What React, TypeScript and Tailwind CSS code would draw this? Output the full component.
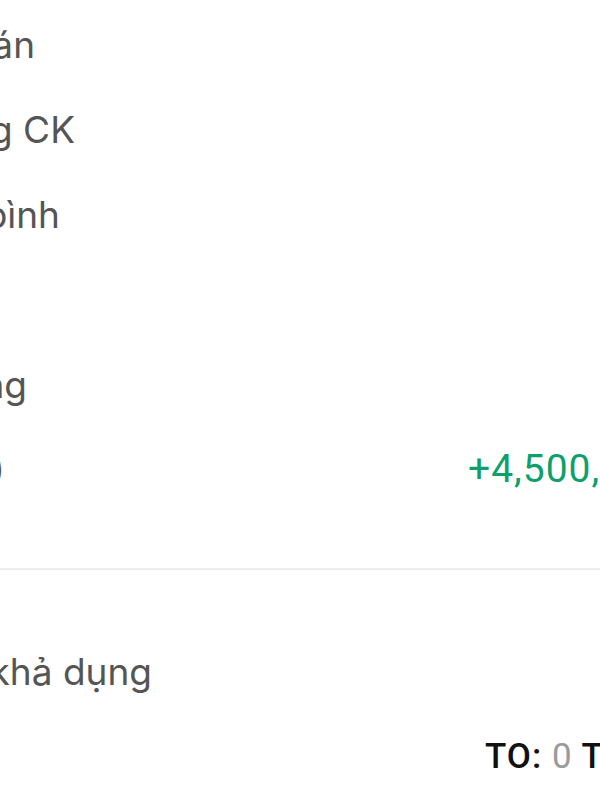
const rows = [
  { label: 'Giá bán', edge: 'w-[35px]' },
  { label: 'Số lượng CK', edge: 'w-[75px]' },
  { label: 'Giá trung bình', edge: 'w-[60px]' },
  { label: 'Phí', edge: 'w-[0px] -ml-[12px]' },
  { label: 'Tổng', edge: 'w-[27px]' },
];

function Label({ text, edge }: { text: string; edge: string }) {
  return (
    <div className={`${edge} shrink-0 flex justify-end whitespace-nowrap`}>
      <span className="text-[37px] leading-none text-[#555555]">{text}</span>
    </div>
  );
}

export default function App() {
  return (
    <div className="relative h-[800px] w-[600px] overflow-hidden bg-white font-['Inter','Noto_Sans',sans-serif]">
      <div className="pt-[2px]">
        {rows.map((r) => (
          <div key={r.label} className="flex h-[85px] items-center">
            <Label text={r.label} edge={r.edge} />
          </div>
        ))}
        <div className="flex h-[85px] items-center">
          <Label text="Lãi/lỗ (VND)" edge="w-[5px]" />
          <div className="ml-[463px] whitespace-nowrap font-['Roboto',sans-serif] text-[39px] leading-none tracking-[1px] text-[#0f9f6c]">
            +4,500,000
          </div>
        </div>
      </div>

      <div className="mt-[56px] h-[2px] bg-[#ececec]" />

      <div className="mt-[59px] flex h-[85px] items-center">
        <Label text="Tiền khả dụng" edge="w-[152px]" />
      </div>
      <div className="flex h-[85px] items-center">
        <div className="ml-[485px] whitespace-nowrap font-['Roboto',sans-serif] text-[35px] font-medium leading-none tracking-[1px] text-[#111111]">
          TO: <span className="font-normal text-[#9a9a9a]">0</span> T1: <span className="font-normal text-[#9a9a9a]">0</span>
        </div>
      </div>
    </div>
  );
}
